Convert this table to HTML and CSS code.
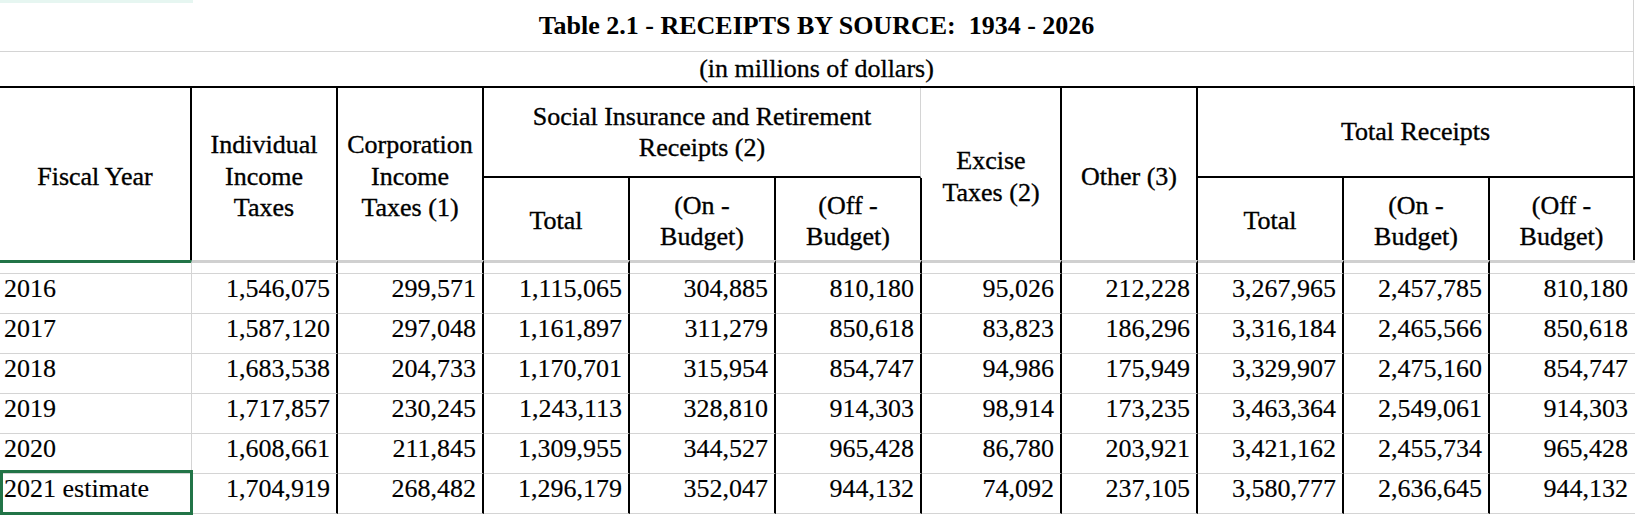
FILE: index.html
```html
<!DOCTYPE html>
<html lang="en">
<head>
<meta charset="utf-8">
<title>Table 2.1 - Receipts by Source</title>
<link rel="stylesheet" href="styles.css">
</head>
<body>
<div class="sheet">
  <div class="topband"></div>
  <div class="title">Table 2.1 - RECEIPTS BY SOURCE:  1934 - 2026</div>
  <div class="subtitle">(in millions of dollars)</div>

  <div class="head">
    <div class="hc tall c1">Fiscal Year</div>
    <div class="hc tall c2">Individual<br>Income<br>Taxes</div>
    <div class="hc tall c3">Corporation<br>Income<br>Taxes (1)</div>
    <div class="hc group si">Social Insurance and Retirement<br>Receipts (2)</div>
    <div class="hc tall c7">Excise<br>Taxes (2)</div>
    <div class="hc tall c8">Other (3)</div>
    <div class="hc group tr">Total Receipts</div>
    <div class="hc sub c4">Total</div>
    <div class="hc sub c5">(On -<br>Budget)</div>
    <div class="hc sub c6">(Off -<br>Budget)</div>
    <div class="hc sub c9">Total</div>
    <div class="hc sub c10">(On -<br>Budget)</div>
    <div class="hc sub c11 last">(Off -<br>Budget)</div>
  </div>

  <div class="grid spacer">
    <div class="sc first"></div><div class="sc"></div><div class="sc"></div><div class="sc"></div><div class="sc"></div><div class="sc"></div><div class="sc"></div><div class="sc"></div><div class="sc"></div><div class="sc"></div><div class="sc last"></div>
  </div>

  <div class="grid row">
    <div class="dc first">2016</div><div class="dc">1,546,075</div><div class="dc">299,571</div><div class="dc">1,115,065</div><div class="dc">304,885</div><div class="dc">810,180</div><div class="dc">95,026</div><div class="dc">212,228</div><div class="dc">3,267,965</div><div class="dc">2,457,785</div><div class="dc last">810,180</div>
  </div>
  <div class="grid row">
    <div class="dc first">2017</div><div class="dc">1,587,120</div><div class="dc">297,048</div><div class="dc">1,161,897</div><div class="dc">311,279</div><div class="dc">850,618</div><div class="dc">83,823</div><div class="dc">186,296</div><div class="dc">3,316,184</div><div class="dc">2,465,566</div><div class="dc last">850,618</div>
  </div>
  <div class="grid row">
    <div class="dc first">2018</div><div class="dc">1,683,538</div><div class="dc">204,733</div><div class="dc">1,170,701</div><div class="dc">315,954</div><div class="dc">854,747</div><div class="dc">94,986</div><div class="dc">175,949</div><div class="dc">3,329,907</div><div class="dc">2,475,160</div><div class="dc last">854,747</div>
  </div>
  <div class="grid row">
    <div class="dc first">2019</div><div class="dc">1,717,857</div><div class="dc">230,245</div><div class="dc">1,243,113</div><div class="dc">328,810</div><div class="dc">914,303</div><div class="dc">98,914</div><div class="dc">173,235</div><div class="dc">3,463,364</div><div class="dc">2,549,061</div><div class="dc last">914,303</div>
  </div>
  <div class="grid row">
    <div class="dc first">2020</div><div class="dc">1,608,661</div><div class="dc">211,845</div><div class="dc">1,309,955</div><div class="dc">344,527</div><div class="dc">965,428</div><div class="dc">86,780</div><div class="dc">203,921</div><div class="dc">3,421,162</div><div class="dc">2,455,734</div><div class="dc last">965,428</div>
  </div>
  <div class="grid row">
    <div class="dc first">2021 estimate</div><div class="dc">1,704,919</div><div class="dc">268,482</div><div class="dc">1,296,179</div><div class="dc">352,047</div><div class="dc">944,132</div><div class="dc">74,092</div><div class="dc">237,105</div><div class="dc">3,580,777</div><div class="dc">2,636,645</div><div class="dc last">944,132</div>
  </div>

  <div class="selection"></div>
</div>
</body>
</html>
```

FILE: styles.css
```css
html, body {
  margin: 0;
  padding: 0;
  background: #ffffff;
}

body {
  font-family: "Liberation Serif", "Times New Roman", serif;
  color: #000000;
  font-size: 26px;
}

.sheet {
  position: relative;
  width: 1635px;
  height: 517px;
  overflow: hidden;
  background: #ffffff;
}

.topband {
  position: absolute;
  left: 0;
  top: 0;
  width: 193px;
  height: 3px;
  background: #e6f6f1;
}

.title {
  box-sizing: border-box;
  height: 52px;
  line-height: 51px;
  text-align: center;
  font-weight: bold;
  font-size: 26px;
  white-space: pre;
  border-bottom: 1px solid #d4d4d4;
  border-right: 1px solid #d4d4d4;
  margin-right: 1px;
}

.subtitle {
  box-sizing: border-box;
  height: 34px;
  line-height: 34px;
  text-align: center;
  font-size: 26px;
  -webkit-text-stroke: 0.3px #000000;
  border-right: 1px solid #d4d4d4;
  margin-right: 1px;
}

.head,
.grid {
  display: grid;
  grid-template-columns: 192px 146px 146px 146px 146px 146px 140px 136px 146px 146px 145px;
}

.head {
  border-top: 2px solid #000000;
  grid-template-rows: 90px 82px;
}

.hc {
  box-sizing: border-box;
  display: flex;
  align-items: center;
  justify-content: center;
  text-align: center;
  line-height: 31.5px;
  -webkit-text-stroke: 0.35px #000000;
  border-right: 2px solid #000000;
}

.tall {
  grid-row: 1 / 3;
  padding-top: 5px;
}

.sub {
  grid-row: 2;
  padding-top: 4px;
}

.group {
  grid-row: 1;
  border-bottom: 2px solid #000000;
}

.c1 { grid-column: 1; }
.c2 { grid-column: 2; }
.c3 { grid-column: 3; }
.si { grid-column: 4 / 7; border-right: 1px solid #d4d4d4; margin-right: 1px; }
.c4 { grid-column: 4; }
.c5 { grid-column: 5; }
.c6 { grid-column: 6; }
.c7 { grid-column: 7; }
.c8 { grid-column: 8; }
.tr { grid-column: 9 / 12; }
.c9 { grid-column: 9; }
.c10 { grid-column: 10; }
.c11 { grid-column: 11; }

.sc {
  box-sizing: border-box;
  height: 14px;
  border-top: 3px solid #d0d0d0;
  border-bottom: 1px solid #d4d4d4;
  border-right: 2px solid #000000;
}

.sc.first {
  border-top-color: #227447;
  border-right: 1px solid #d4d4d4;
}

.sc.last {
  border-right: none;
}

.dc {
  box-sizing: border-box;
  height: 40px;
  line-height: 29px;
  padding: 0 6px 10px 0;
  text-align: right;
  white-space: nowrap;
  -webkit-text-stroke: 0.15px #000000;
  border-bottom: 1px solid #d4d4d4;
  border-right: 2px solid #000000;
}

.dc.first {
  text-align: left;
  padding-left: 4px;
  border-right: 1px solid #d4d4d4;
}

.dc.last {
  border-right: none;
  padding-right: 7px;
}

.selection {
  position: absolute;
  left: 0;
  top: 470px;
  width: 193px;
  height: 45px;
  box-sizing: border-box;
  border: 3px solid #227447;
}
```
